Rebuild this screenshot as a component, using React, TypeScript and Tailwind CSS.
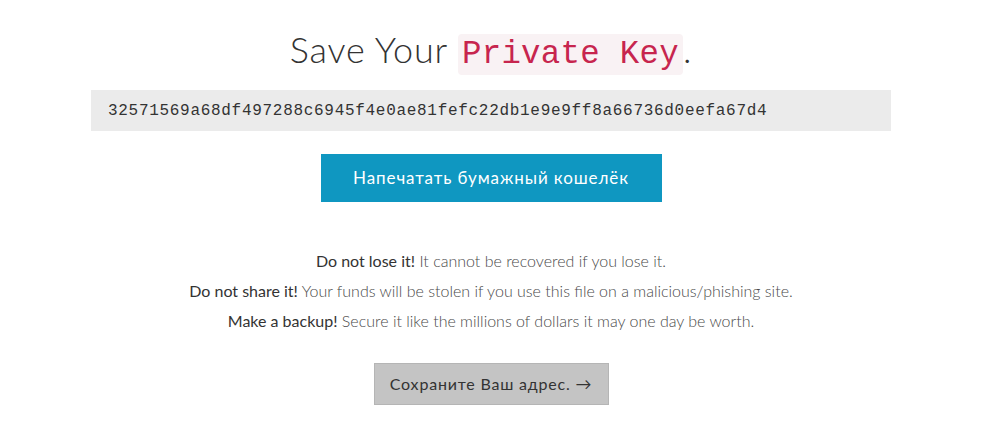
import React from "react";

export default function App() {
  return (
    <div className="w-[1005px] h-[423px] bg-white overflow-hidden" style={{ fontFamily: "Lato, 'Noto Sans', sans-serif" }}>
      <div className="w-[982px] flex flex-col items-center">
        <h1 className="mt-[29px] text-[36px] leading-[40px] font-light text-[#333] tracking-[0.8px]">
          Save Your{" "}
          <code className="text-[32.4px] tracking-[0.3px] px-[4px] py-[2px] rounded-[4px] bg-[#f9f2f4] text-[#c7254e] font-normal" style={{ fontFamily: "'Liberation Mono', monospace" }}>
            Private Key
          </code>
          .
        </h1>
        <div className="mt-[15px] w-[800px] h-[41px] bg-[#ebebeb] flex items-center px-[17px]">
          <span className="text-[16px] tracking-[0.7px] text-[#333]" style={{ fontFamily: "'Liberation Mono', monospace" }}>
            32571569a68df497288c6945f4e0ae81fefc22db1e9e9ff8a66736d0eefa67d4
          </span>
        </div>
        <button className="mt-[23px] w-[341px] h-[48px] bg-[#0f97c1] text-white text-[17px] tracking-[0.9px] font-normal">
          Напечатать бумажный кошелёк
        </button>
        <div className="mt-[44px] flex flex-col items-center text-[16px] leading-[30px] text-[#4a4a4a] font-light">
          <p>
            <strong className="font-normal text-[#333]">Do not lose it!</strong> It cannot be recovered if you lose it.
          </p>
          <p>
            <strong className="font-normal text-[#333]">Do not share it!</strong> Your funds will be stolen if you use this file on a malicious/phishing site.
          </p>
          <p>
            <strong className="font-normal text-[#333]">Make a backup!</strong> Secure it like the millions of dollars it may one day be worth.
          </p>
        </div>
        <button className="mt-[27px] w-[235px] h-[42px] bg-[#c4c4c4] border border-[#b5b5b5] text-[#333] text-[16px] tracking-[0.8px]">
          Сохраните Ваш адрес. →
        </button>
      </div>
    </div>
  );
}
